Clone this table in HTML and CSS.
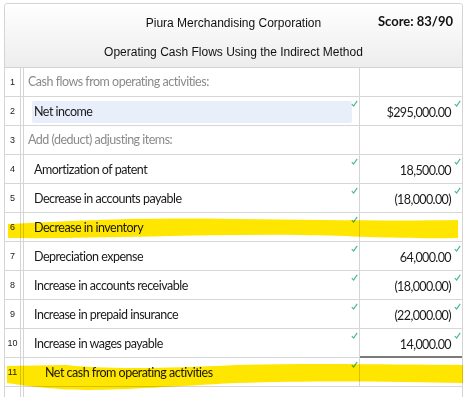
FILE: index.html
```html
<!DOCTYPE html>
<html>
<head>
<meta charset="utf-8">
<link rel="stylesheet" href="styles.css">
</head>
<body>
<div class="sheet">
  <div class="grid">
    <div class="head">
      <div class="spacer"></div>
      <div class="titles">
        <div class="title">Piura Merchandising Corporation</div>
        <div class="title second">Operating Cash Flows Using the Indirect Method</div>
      </div>
      <div class="score">Score: 83/90</div>
    </div>

    <div class="row"><div class="num">1</div><div class="desc label">Cash flows from operating activities:</div><div class="amt"></div></div>
    <div class="row"><div class="num">2</div><div class="desc"><div class="field filled">Net income</div><svg class="ok" viewBox="0 0 7 7"><path d="M0.8 4.2 L2.6 6 L6.2 0.8"/></svg></div><div class="amt"><span>$295,000.00</span><svg class="ok" viewBox="0 0 7 7"><path d="M0.8 4.2 L2.6 6 L6.2 0.8"/></svg></div></div>
    <div class="row"><div class="num">3</div><div class="desc label">Add (deduct) adjusting items:</div><div class="amt"></div></div>
    <div class="row"><div class="num">4</div><div class="desc"><div class="field">Amortization of patent</div><svg class="ok" viewBox="0 0 7 7"><path d="M0.8 4.2 L2.6 6 L6.2 0.8"/></svg></div><div class="amt"><span>18,500.00</span><svg class="ok" viewBox="0 0 7 7"><path d="M0.8 4.2 L2.6 6 L6.2 0.8"/></svg></div></div>
    <div class="row"><div class="num">5</div><div class="desc"><div class="field">Decrease in accounts payable</div><svg class="ok" viewBox="0 0 7 7"><path d="M0.8 4.2 L2.6 6 L6.2 0.8"/></svg></div><div class="amt"><span>(18,000.00)</span><svg class="ok" viewBox="0 0 7 7"><path d="M0.8 4.2 L2.6 6 L6.2 0.8"/></svg></div></div>
    <div class="row"><div class="num">6</div><div class="desc"><div class="field">Decrease in inventory</div><svg class="ok" viewBox="0 0 7 7"><path d="M0.8 4.2 L2.6 6 L6.2 0.8"/></svg></div><div class="amt"></div></div>
    <div class="row"><div class="num">7</div><div class="desc"><div class="field">Depreciation expense</div><svg class="ok" viewBox="0 0 7 7"><path d="M0.8 4.2 L2.6 6 L6.2 0.8"/></svg></div><div class="amt"><span>64,000.00</span><svg class="ok" viewBox="0 0 7 7"><path d="M0.8 4.2 L2.6 6 L6.2 0.8"/></svg></div></div>
    <div class="row"><div class="num">8</div><div class="desc"><div class="field">Increase in accounts receivable</div><svg class="ok" viewBox="0 0 7 7"><path d="M0.8 4.2 L2.6 6 L6.2 0.8"/></svg></div><div class="amt"><span>(18,000.00)</span><svg class="ok" viewBox="0 0 7 7"><path d="M0.8 4.2 L2.6 6 L6.2 0.8"/></svg></div></div>
    <div class="row"><div class="num">9</div><div class="desc"><div class="field">Increase in prepaid insurance</div><svg class="ok" viewBox="0 0 7 7"><path d="M0.8 4.2 L2.6 6 L6.2 0.8"/></svg></div><div class="amt"><span>(22,000.00)</span><svg class="ok" viewBox="0 0 7 7"><path d="M0.8 4.2 L2.6 6 L6.2 0.8"/></svg></div></div>
    <div class="row"><div class="num">10</div><div class="desc"><div class="field">Increase in wages payable</div><svg class="ok" viewBox="0 0 7 7"><path d="M0.8 4.2 L2.6 6 L6.2 0.8"/></svg></div><div class="amt underline"><span>14,000.00</span><svg class="ok" viewBox="0 0 7 7"><path d="M0.8 4.2 L2.6 6 L6.2 0.8"/></svg></div></div>
    <div class="row"><div class="num">11</div><div class="desc"><div class="field total">Net cash from operating activities</div><svg class="ok" viewBox="0 0 7 7"><path d="M0.8 4.2 L2.6 6 L6.2 0.8"/></svg></div><div class="amt"></div></div>
    <div class="row last"><div class="num"></div><div class="rest"></div></div>
  </div>

  <svg class="marker" viewBox="0 0 472 397" width="472" height="397">
    <path d="M8 221 C60 219 120 214 236 216 C320 217 400 218 458 217 L458 235 C400 236 360 233 300 232 C200 231 100 236 8 235 Z"/>
    <path d="M7 363 L66 362 C100 366 160 366 236 362 C330 360 400 362 463 362 L463 380 C400 379 330 377 236 380 C160 384 100 389 60 386 C30 384 15 381 7 380 Z"/>
  </svg>
</div>
</body>
</html>
```
FILE: styles.css
```css
html, body {
  margin: 0;
  padding: 0;
  overflow: hidden;
  background: #ffffff;
}

.sheet {
  position: relative;
  width: 472px;
  height: 397px;
}

.grid {
  margin: 3px 0 0 4px;
  width: 457px;
  border: 1px solid #d4d4d4;
  border-radius: 3px 3px 0 0;
  font-family: "Lato", "Liberation Sans", sans-serif;
  color: #1a1a1a;
}

.head {
  display: grid;
  grid-template-columns: 1fr auto 1fr;
  padding: 12px 9px 7px 9px;
  height: 44px;
  background: linear-gradient(#ffffff, #ededed);
  border-bottom: 1px solid #d4d4d4;
  border-radius: 3px 3px 0 0;
}

.titles {
  display: flex;
  flex-direction: column;
  align-items: center;
  gap: 15px;
}

.title {
  font-family: "Liberation Sans", Arial, sans-serif;
  font-size: 12px;
  line-height: 14px;
  color: #111;
  white-space: nowrap;
}

.score {
  justify-self: end;
  align-self: start;
  margin-top: -2px;
  font-size: 13px;
  line-height: 14px;
  font-weight: bold;
  color: #111;
  font-variant-numeric: lining-nums;
}

.row {
  display: grid;
  grid-template-columns: 16px 2px 337px 102px;
  height: 28px;
  border-bottom: 1px solid #d6d6d6;
}

.num {
  border-right: 1px solid #d4d4d4;
  font-family: "Liberation Sans", Arial, sans-serif;
  font-size: 9px;
  line-height: 28px;
  text-align: center;
  color: #222;
  grid-column: 1;
}

.desc {
  grid-column: 3;
  position: relative;
  border-left: 1px solid #d4d4d4;
  border-right: 1px solid #d4d4d4;
  font-size: 12.5px;
  letter-spacing: -0.5px;
}

.desc.label {
  padding-left: 4px;
  line-height: 28px;
  color: #8a8a8a;
}

.field {
  margin: 4px 7px 0 8px;
  padding-left: 2px;
  height: 22px;
  line-height: 22px;
  border-radius: 2px;
  white-space: nowrap;
}

.field.filled {
  background: #e8effb;
}

.field.total {
  padding-left: 13px;
}

.amt {
  grid-column: 4;
  position: relative;
  display: flex;
  justify-content: flex-end;
  align-items: center;
  padding-right: 11px;
  padding-top: 2px;
  font-size: 12.5px;
  letter-spacing: -0.6px;
  font-variant-numeric: lining-nums;
}

.amt.underline {
  box-shadow: 0 1px 0 #7a7a7a, inset 0 -1px 0 #7a7a7a;
}

.ok {
  position: absolute;
  top: 3px;
  right: 1px;
  width: 7px;
  height: 7px;
  fill: none;
  stroke: #4fb897;
  stroke-width: 1.2;
}

.row.last {
  height: 10px;
  border-bottom: none;
}

.rest {
  grid-column: 3 / 5;
  border-left: 1px solid #d4d4d4;
}

.marker {
  position: absolute;
  left: 0;
  top: 0;
  pointer-events: none;
  mix-blend-mode: multiply;
}

.marker path {
  fill: #ffe600;
}
```
